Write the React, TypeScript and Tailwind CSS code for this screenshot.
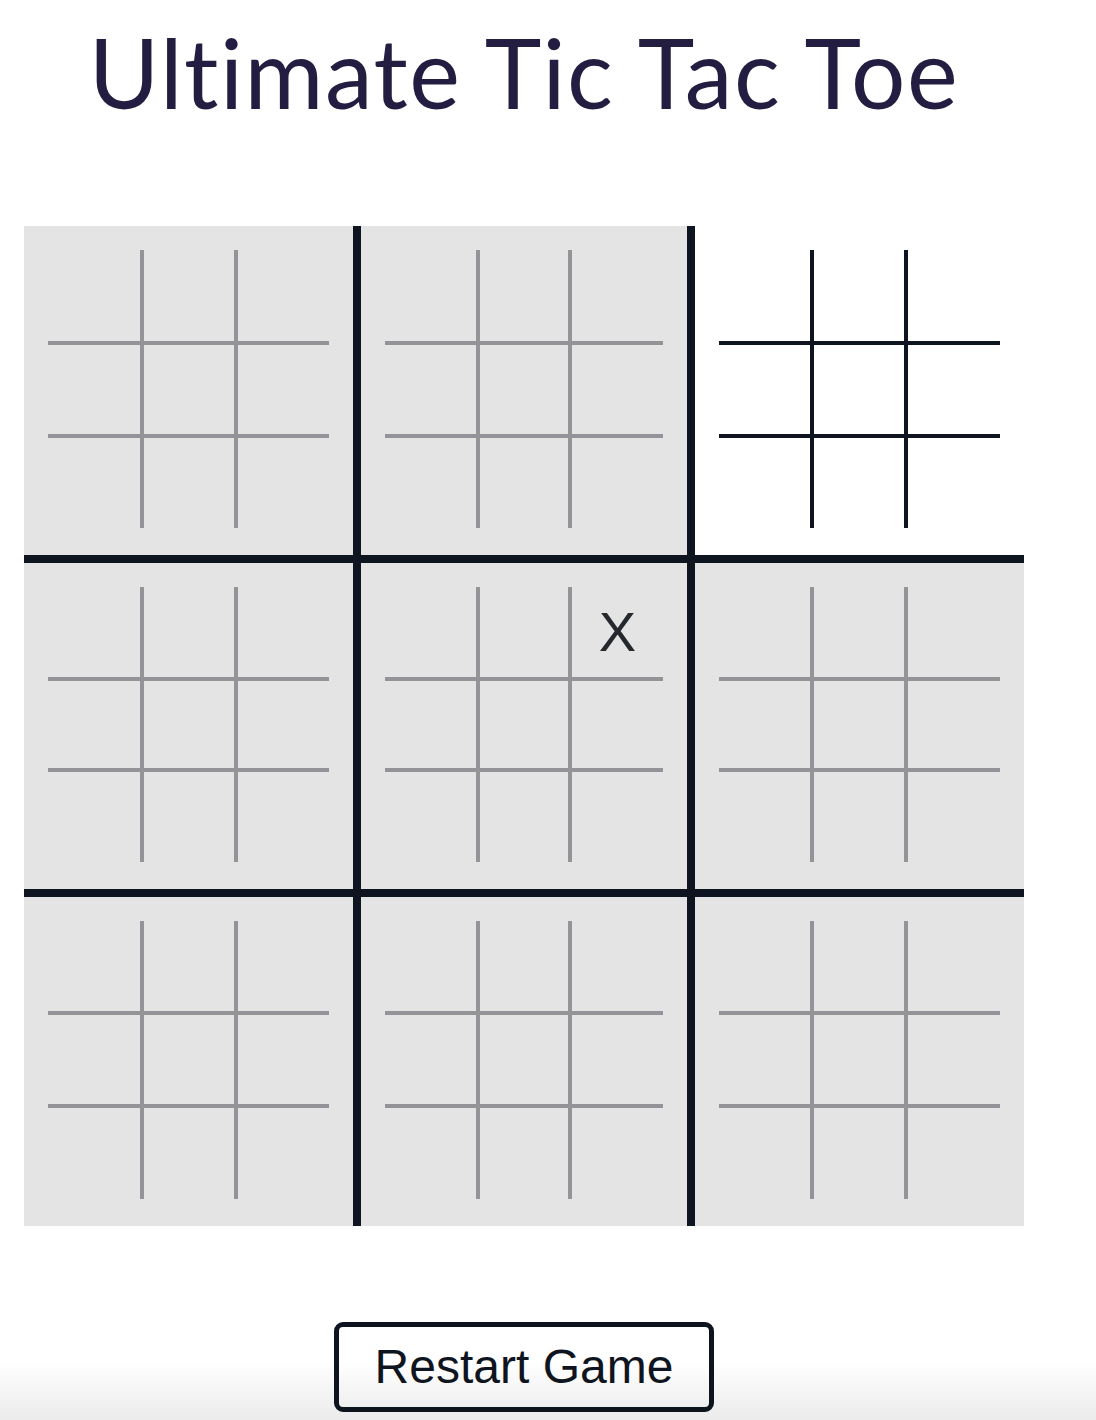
import React from "react";

type Mark = "X" | "O" | "";

const marks: Record<string, Mark> = {
  "4-2": "X",
};

function InnerCell({ r, c, active, mark }: { r: number; c: number; active: boolean; mark: Mark }) {
  const cls = [
    "flex items-center justify-center",
    active ? "border-[#0f1520]" : "border-[#939398]",
    c < 2 ? "border-r-2" : "",
    c > 0 ? "border-l-2" : "",
    r < 2 ? "border-b-2" : "",
    r > 0 ? "border-t-2" : "",
  ].join(" ");
  return (
    <div className={cls}>
      {mark && (
        <span className="font-['Liberation_Sans',Arial,sans-serif] text-[56px] leading-none text-[#25282c]">
          {mark}
        </span>
      )}
    </div>
  );
}

function BigCell({ index }: { index: number }) {
  const r = Math.floor(index / 3);
  const c = index % 3;
  const active = index === 2;
  const cls = [
    "min-w-0 min-h-0 px-6 pt-6 pb-[27px] border-[#0f1520]",
    active ? "bg-white" : "bg-[#e4e4e4]",
    c < 2 ? "border-r-4" : "",
    c > 0 ? "border-l-4" : "",
    r < 2 ? "border-b-4" : "",
    r > 0 ? "border-t-4" : "",
  ].join(" ");
  return (
    <div className={cls}>
      <div className="grid grid-cols-3 grid-rows-3 w-full h-full">
        {Array.from({ length: 9 }).map((_, i) => (
          <InnerCell
            key={i}
            r={Math.floor(i / 3)}
            c={i % 3}
            active={active}
            mark={marks[`${index}-${i}`] ?? ""}
          />
        ))}
      </div>
    </div>
  );
}

export default function App() {
  return (
    <div className="relative min-h-[1420px] bg-white overflow-hidden">
      <div className="ml-6 w-[1000px] flex flex-col items-center">
        <h1 className="mt-[20px] h-[110px] font-['Lato',sans-serif] text-[96px] leading-[104px] tracking-[1.5px] [font-variant-ligatures:none] text-[#231d42] font-normal whitespace-nowrap">
          Ultimate Tic Tac Toe
        </h1>
        <div className="mt-[96px] grid grid-cols-3 grid-rows-3 w-[1000px] h-[1000px]">
          {Array.from({ length: 9 }).map((_, i) => (
            <BigCell key={i} index={i} />
          ))}
        </div>
        <button className="mt-[96px] h-[90px] px-[36px] border-[5px] border-[#0f1520] rounded-[9px] bg-white font-['Liberation_Sans',Arial,sans-serif] text-[48px] leading-none text-[#0f1520]">
          Restart Game
        </button>
      </div>
      <div className="pointer-events-none absolute bottom-0 left-0 right-0 h-[60px] bg-gradient-to-b from-[#00000000] to-[#00000014]" />
    </div>
  );
}
